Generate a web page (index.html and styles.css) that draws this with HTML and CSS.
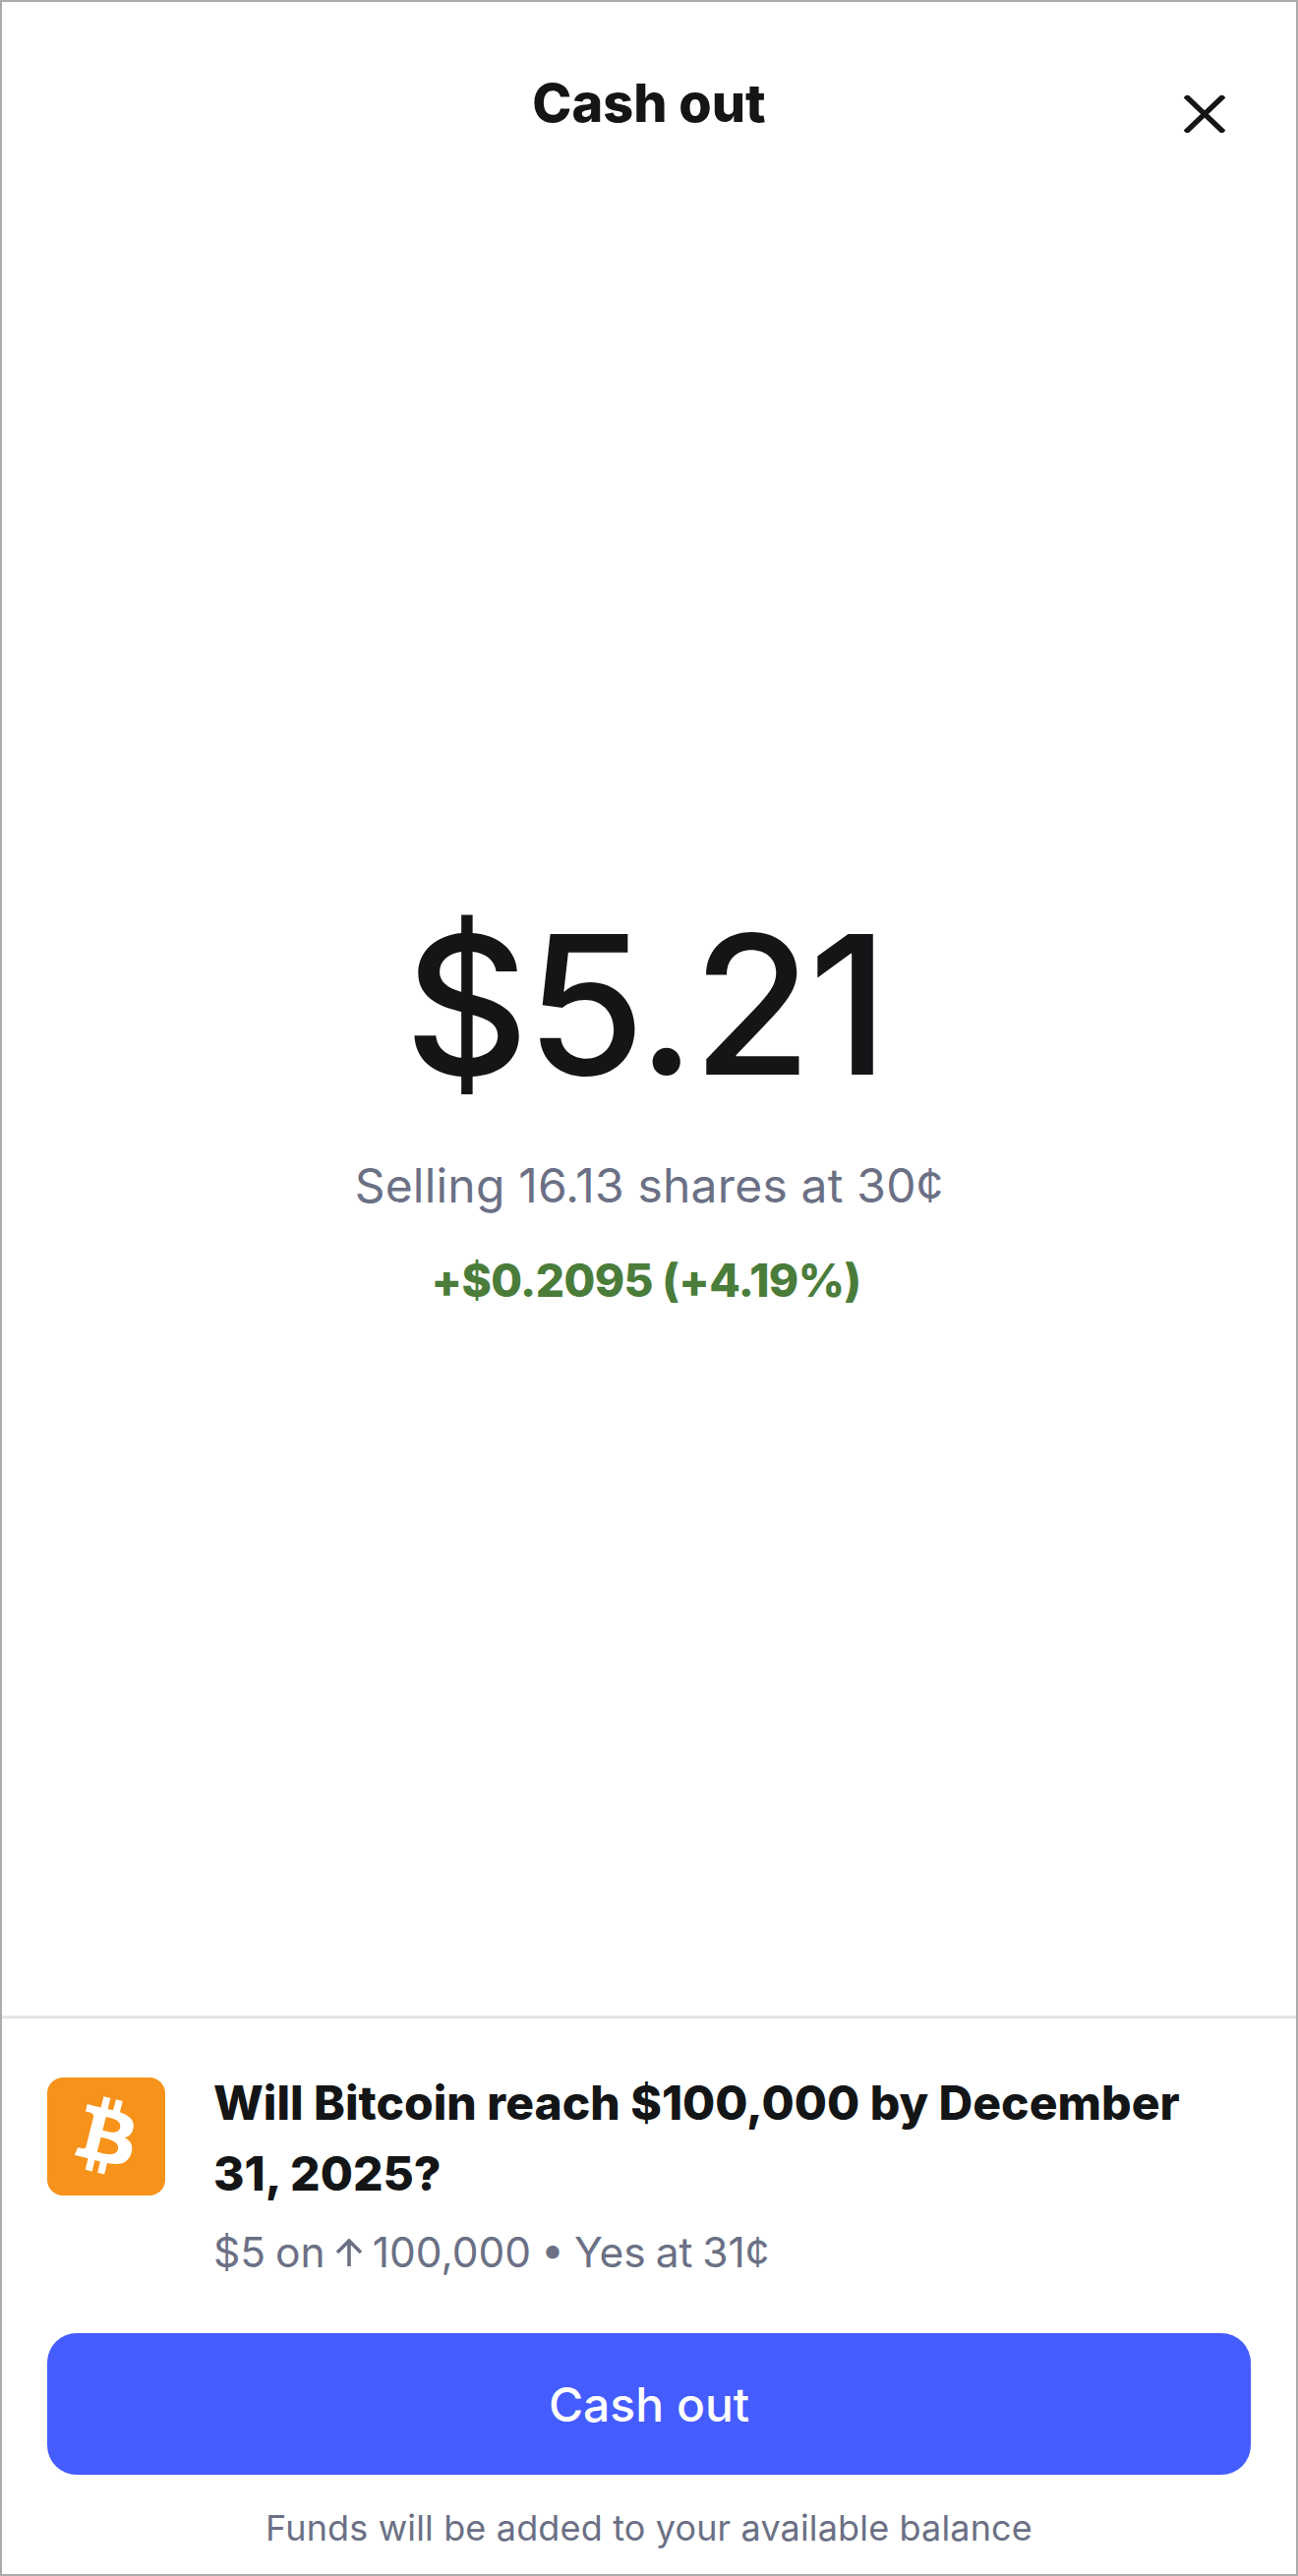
FILE: index.html
```html
<!DOCTYPE html>
<html lang="en">
<head>
    <meta charset="UTF-8">
    <meta name="viewport" content="width=device-width, initial-scale=1.0">
    <title>Cash out</title>
    <link rel="stylesheet" href="styles.css">
</head>
<body>
    <div class="sheet">
        <header class="top-bar">
            <h1 class="top-title">Cash out</h1>
            <button class="close-btn" aria-label="Close">
                <svg width="42" height="38" viewBox="0 0 42 38" fill="none" stroke="#131517" stroke-width="5.5">
                    <path d="M1.5 0.5 L40.5 37.5 M40.5 0.5 L1.5 37.5"/>
                </svg>
            </button>
        </header>

        <main class="summary">
            <div class="amount">$5.21</div>
            <p class="selling">Selling 16.13 shares at 30¢</p>
            <p class="profit">+$0.2095 (+4.19%)</p>
        </main>

        <footer class="bottom">
            <div class="market">
                <div class="market-icon">
                    <svg width="120" height="120" viewBox="0.5 0.5 23 23">
                        <path fill="#fff" fill-rule="evenodd" d="M17.31 10.29c.24-1.59-.974-2.45-2.64-3.03l.54-2.153-1.315-.33-.525 2.107c-.345-.087-.705-.167-1.064-.25l.526-2.127-1.32-.33-.54 2.165c-.285-.067-.565-.132-.84-.2l-1.815-.45-.35 1.407s.975.225.955.236c.535.136.63.486.615.766l-1.477 5.92c-.075.166-.24.406-.614.314.015.02-.96-.24-.96-.24l-.66 1.51 1.71.426.93.242-.54 2.19 1.32.327.54-2.17c.36.1.705.19 1.05.273l-.51 2.154 1.32.33.545-2.19c2.24.427 3.93.257 4.64-1.774.57-1.637-.03-2.58-1.217-3.196.854-.193 1.5-.76 1.68-1.93h.01zm-3.01 4.22c-.404 1.64-3.157.75-4.05.53l.72-2.9c.896.23 3.757.67 3.33 2.37zm.41-4.24c-.37 1.49-2.662.735-3.405.55l.654-2.64c.744.18 3.137.52 2.75 2.084v.006z"/>
                    </svg>
                </div>
                <div class="market-info">
                    <h2 class="market-title">Will Bitcoin reach $100,000 by December 31, 2025?</h2>
                    <p class="market-bet">
                        <span>$5 on</span>
                        <svg class="arrow" width="28" height="28" viewBox="0 0 28 28" fill="none" stroke="#6b7085" stroke-width="3.6">
                            <path d="M14 28 V2 M2 14 L14 2 L26 14"/>
                        </svg>
                        <span>100,000 • Yes at 31¢</span>
                    </p>
                </div>
            </div>
            <button class="cash-btn">Cash out</button>
            <p class="note">Funds will be added to your available balance</p>
        </footer>
    </div>
</body>
</html>
```

FILE: styles.css
```css
* {
    box-sizing: border-box;
}

body {
    margin: 0;
    font-family: Inter, "Liberation Sans", sans-serif;
    background-color: #ffffff;
    color: #131517;
}

.sheet {
    display: flex;
    flex-direction: column;
    height: 2620px;
    border: 2px solid #ababab;
    background-color: #ffffff;
}

.top-bar {
    display: grid;
    grid-template-columns: 1fr auto 1fr;
    padding: 0 72px;
}

.top-title {
    grid-column: 2;
    margin: 68px 0 0;
    font-size: 54px;
    line-height: 70px;
    font-weight: 800;
    letter-spacing: 0;
}

.close-btn {
    grid-column: 3;
    justify-self: end;
    align-self: start;
    margin-top: 95px;
    padding: 0;
    border: none;
    background: none;
    line-height: 0;
}

.summary {
    flex: 1;
    display: flex;
    flex-direction: column;
    align-items: center;
    padding-top: 762px;
}

.amount {
    margin-right: 8px;
    font-size: 196px;
    line-height: 240px;
    font-weight: 500;
    letter-spacing: -3px;
    color: #131517;
}

.selling {
    margin: 34px 0 0;
    font-size: 48px;
    line-height: 60px;
    letter-spacing: 0.2px;
    color: #6b7085;
}

.profit {
    margin: 36px 6px 0 0;
    font-size: 46px;
    line-height: 60px;
    font-weight: 800;
    letter-spacing: -0.6px;
    color: #4a7c3a;
}

.bottom {
    border-top: 3px solid #e3e3e8;
    padding: 60px 46px 0;
    height: 568px;
}

.market {
    display: flex;
    gap: 49px;
}

.market-icon {
    flex: none;
    width: 120px;
    height: 120px;
    border-radius: 16px;
    background-color: #f7931a;
}

.market-title {
    margin: -10px 0 0;
    font-size: 48px;
    line-height: 72px;
    font-weight: 800;
    letter-spacing: 0;
    color: #131517;
}

.market-bet {
    display: flex;
    align-items: center;
    gap: 10px;
    margin: 14px 0 0;
    font-size: 42.5px;
    line-height: 60px;
    word-spacing: -2px;
    color: #6b7085;
}

.cash-btn {
    display: block;
    width: 100%;
    height: 144px;
    margin-top: 52px;
    border: none;
    border-radius: 30px;
    background-color: #455cff;
    color: #ffffff;
    font-family: inherit;
    font-size: 48px;
    font-weight: 500;
}

.note {
    margin: 32px 0 0;
    text-align: center;
    font-size: 36px;
    line-height: 44px;
    letter-spacing: 0.15px;
    color: #6b7085;
}
```
